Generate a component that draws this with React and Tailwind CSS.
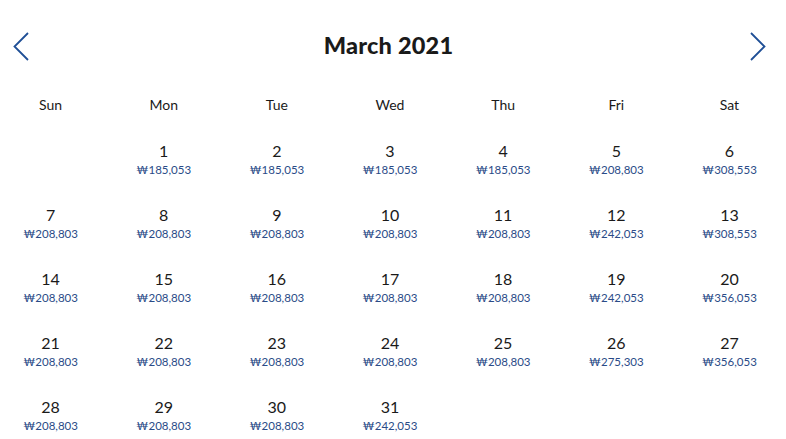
const prices = {
  1: "185,053", 2: "185,053", 3: "185,053", 4: "185,053", 5: "208,803", 6: "308,553",
  7: "208,803", 8: "208,803", 9: "208,803", 10: "208,803", 11: "208,803", 12: "242,053", 13: "308,553",
  14: "208,803", 15: "208,803", 16: "208,803", 17: "208,803", 18: "208,803", 19: "242,053", 20: "356,053",
  21: "208,803", 22: "208,803", 23: "208,803", 24: "208,803", 25: "208,803", 26: "275,303", 27: "356,053",
  28: "208,803", 29: "208,803", 30: "208,803", 31: "242,053",
};

const weekdays = ["Sun", "Mon", "Tue", "Wed", "Thu", "Fri", "Sat"];

function Chevron({ flip }) {
  return (
    <svg width="16" height="29" viewBox="0 0 16 29" className={flip ? "-scale-x-100" : ""}>
      <polyline points="15,1 1.5,14.5 15,28" fill="none" stroke="#1f4f96" strokeWidth="1.8" />
    </svg>
  );
}

export default function App() {
  // March 2021 starts on a Monday
  const cells = [null];
  for (let d = 1; d <= 31; d++) cells.push(d);

  return (
    <div className="w-[786px] h-[439px] overflow-hidden bg-white font-['Lato',sans-serif] text-[#1a1a1a]">
      <div className="flex items-center justify-between h-[64px] pt-[28px] pl-[13px] pr-[20px]">
        <button>
          <Chevron />
        </button>
        <h1 className="text-[23.5px] font-black tracking-[0.2px] pr-[2px]">March 2021</h1>
        <button>
          <Chevron flip />
        </button>
      </div>

      <div className="grid grid-cols-7 w-[792px] -ml-[6px] mt-[30px]">
        {weekdays.map((w) => (
          <div key={w} className="text-center text-[14px] leading-[22px]">
            {w}
          </div>
        ))}
      </div>

      <div className="grid grid-cols-7 w-[792px] -ml-[6px] mt-[25px]">
        {cells.map((d, i) => (
          <div key={i} className="h-[64px] flex flex-col items-center">
            {d && (
              <>
                <span className="text-[16px] leading-[20px]">{d}</span>
                <span className="text-[11.5px] leading-[18px] text-[#2a4b87]">₩{prices[d]}</span>
              </>
            )}
          </div>
        ))}
      </div>
    </div>
  );
}
